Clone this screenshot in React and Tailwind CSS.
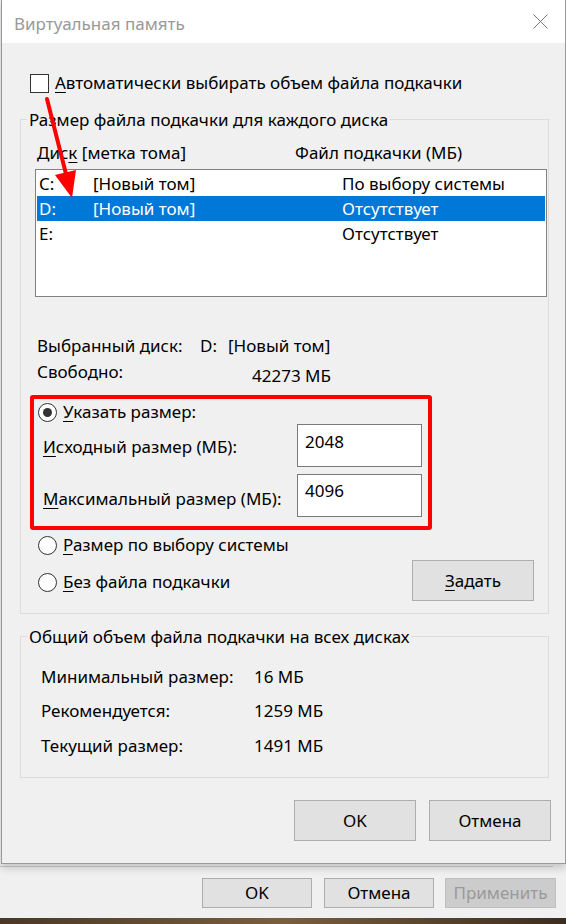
import React from 'react'

function Radio({ checked }) {
  return (
    <span className="w-[19px] h-[19px] rounded-full border border-[#333] bg-white flex items-center justify-center shrink-0">
      {checked && <span className="w-[9px] h-[9px] rounded-full bg-[#333]" />}
    </span>
  )
}

function U({ children }) {
  return <span className="underline decoration-1 underline-offset-[3px]">{children}</span>
}

function WinButton({ children, className = '' }) {
  return (
    <button className={`w-[122px] h-[41px] bg-[#e1e1e1] border border-[#adadad] text-black ${className}`}>
      {children}
    </button>
  )
}

const drives = [
  { d: 'C:', label: '[Новый том]', file: 'По выбору системы' },
  { d: 'D:', label: '[Новый том]', file: 'Отсутствует', selected: true },
  { d: 'E:', label: '', file: 'Отсутствует' },
]

const totals = [
  ['Минимальный размер:', '16 МБ', 'mt-[16px]'],
  ['Рекомендуется:', '1259 МБ', 'mt-[10px]'],
  ['Текущий размер:', '1491 МБ', 'mt-[11px]'],
]

export default function App() {
  return (
    <div className="w-[566px] h-[924px] bg-[#f0f0f0] relative overflow-hidden font-['Noto_Sans',sans-serif] text-[17px] leading-[24px] text-black">
      {/* dialog */}
      <div className="ml-[1px] w-[565px] h-[864px] flex flex-col border-l border-r border-b border-[#999] bg-[#f0f0f0] shadow-[0_4px_8px_rgba(0,0,0,0.18)] relative z-10">
        <div className="h-[43px] shrink-0 bg-white flex items-center justify-between pl-[12px] pr-[17px]">
          <span className="text-[#999] pt-[5px]">Виртуальная память</span>
          <svg width="15" height="15" viewBox="0 0 15 15">
            <path d="M0.5 0.5 L14.5 14.5 M14.5 0.5 L0.5 14.5" stroke="#777" strokeWidth="1" fill="none" />
          </svg>
        </div>

        <div className="mt-[28px] pl-[28px] h-[24px] flex items-center">
          <span className="w-[19px] h-[19px] border border-[#333] bg-white shrink-0" />
          <span className="ml-[6px]"><U>А</U>втоматически выбирать объем файла подкачки</span>
        </div>

        {/* per-disk group */}
        <div className="mt-[24px] ml-[18px] w-[529px] border border-[#dcdcdc] flex flex-col pb-[12px]">
          <div className="-mt-[12px] ml-[6px] px-[2px] w-fit bg-[#f0f0f0]">Размер файла подкачки для каждого диска</div>

          <div className="mt-[9px] pl-[16px] flex">
            <span className="w-[258px]">Дис<U>к</U> [метка тома]</span>
            <span>Файл подкачки (МБ)</span>
          </div>

          <div className="mt-[4px] ml-[14px] w-[512px] h-[128px] border border-[#828282] bg-white p-[1px]">
            {drives.map((r) => (
              <div
                key={r.d}
                className={`h-[25px] flex items-center ${r.selected ? 'bg-[#0078d7] text-white' : ''}`}
              >
                <span className="w-[56px] pl-[2px]">{r.d}</span>
                <span className="w-[249px]">{r.label}</span>
                <span>{r.file}</span>
              </div>
            ))}
          </div>

          <div className="mt-[37px] pl-[16px] h-[24px] flex">
            <span className="w-[163px]">Выбранный диск:</span>
            <span className="w-[28px]">D:</span>
            <span>[Новый том]</span>
          </div>
          <div className="mt-[2px] pl-[16px] h-[24px] flex items-start">
            <span className="w-[215px]">Свободно:</span>
            <span className="mt-[4px]">42273 МБ</span>
          </div>

          <div className="mt-[11px] ml-[9px] w-[402px] h-[135px] border-4 border-[#ff0000] rounded-[3px] flex flex-col">
            <div className="mt-[1px] pl-[4px] h-[24px] flex items-center">
              <Radio checked />
              <span className="ml-[6px]"><U>У</U>казать размер:</span>
            </div>
            <div className="flex items-start">
              <span className="pl-[9px] w-[263px] pt-[11px]"><U>И</U>сходный размер (МБ):</span>
              <div className="w-[125px] h-[43px] border border-[#7a7a7a] bg-white pl-[7px] pt-[5px]">2048</div>
            </div>
            <div className="mt-[7px] flex items-start">
              <span className="pl-[9px] w-[263px] pt-[13px]"><U>М</U>аксимальный размер (МБ):</span>
              <div className="w-[125px] h-[43px] border border-[#7a7a7a] bg-white pl-[7px] pt-[4px]">4096</div>
            </div>
          </div>

          <div className="mt-[3px] pl-[17px] h-[24px] flex items-center">
            <Radio />
            <span className="ml-[6px]"><U>Р</U>азмер по выбору системы</span>
          </div>
          <div className="mt-[3px] pl-[17px] flex items-start">
            <div className="pt-[10px] flex items-center h-[34px]">
              <Radio />
              <span className="ml-[6px]"><U>Б</U>ез файла подкачки</span>
            </div>
            <WinButton className="ml-auto mr-[14px]"><U>З</U>адать</WinButton>
          </div>
        </div>

        {/* totals group */}
        <div className="mt-[22px] ml-[18px] w-[529px] border border-[#dcdcdc] flex flex-col pb-[19px]">
          <div className="-mt-[12px] ml-[6px] px-[2px] w-fit bg-[#f0f0f0]">Общий объем файла подкачки на всех дисках</div>
          {totals.map(([k, v, m]) => (
            <div key={k} className={`${m} pl-[20px] flex`}>
              <span className="w-[213px]">{k}</span>
              <span>{v}</span>
            </div>
          ))}
        </div>

        <div className="mt-[22px] pr-[14px] flex justify-end gap-[13px]">
          <WinButton>OK</WinButton>
          <WinButton>Отмена</WinButton>
        </div>
      </div>

      {/* parent window strip */}
      <div className="mt-[2px] h-[1px] w-[553px] bg-[#c8c8c8]" />
      <div className="mt-[11px] ml-[202px] flex text-[17px]">
        <button className="w-[110px] h-[30px] bg-[#e1e1e1] border border-[#adadad]">OK</button>
        <button className="ml-[12px] w-[110px] h-[30px] bg-[#e1e1e1] border border-[#adadad]">Отмена</button>
        <button className="ml-[11px] w-[111px] h-[30px] bg-[#cccccc] border border-[#bfbfbf] text-[#9a9a9a]">Применить</button>
      </div>
      <div className="mt-[10px] h-[6px] bg-gradient-to-r from-[#4a3826] via-[#7a5f3e] to-[#3c2d1e]" />

      {/* red annotation arrow */}
      <svg className="absolute left-0 top-0 z-20 pointer-events-none" width="566" height="924">
        <line x1="47" y1="99" x2="66" y2="174" stroke="#ff0000" strokeWidth="4" strokeLinecap="round" />
        <polygon points="76,170 55,175 72,198" fill="#ff0000" />
      </svg>
    </div>
  )
}
